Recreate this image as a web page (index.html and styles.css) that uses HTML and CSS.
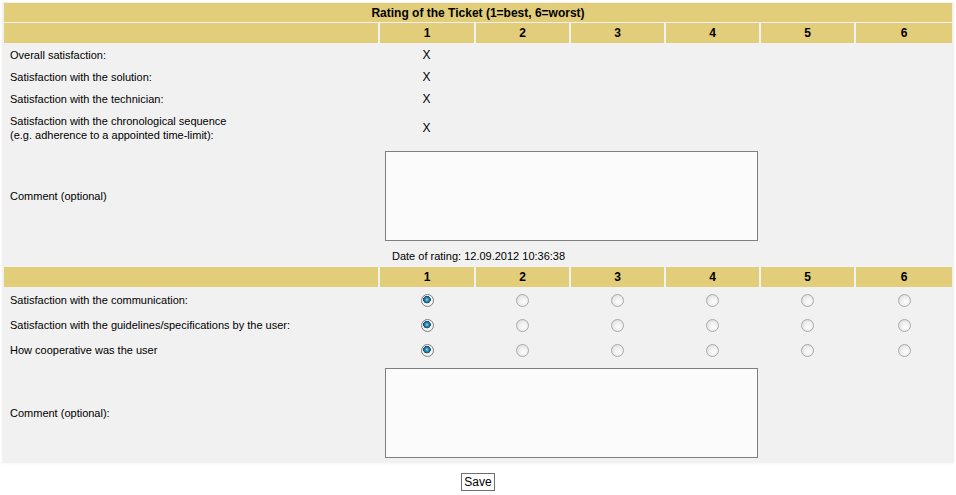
FILE: index.html
```html
<!DOCTYPE html>
<html>
<head>
<meta charset="utf-8">
<title>Rating of the Ticket</title>
<link rel="stylesheet" href="styles.css">
</head>
<body>
<form class="page">
<table class="rating">
  <colgroup>
    <col class="c-label"><col class="c-a"><col class="c-b"><col class="c-b"><col class="c-b"><col class="c-b"><col class="c-c">
  </colgroup>
  <tr class="head h19"><th colspan="7">Rating of the Ticket (1=best, 6=worst)</th></tr>
  <tr class="head h20"><th></th><th>1</th><th>2</th><th>3</th><th>4</th><th>5</th><th>6</th></tr>
  <tr class="h21"><td class="label">Overall satisfaction:</td><td class="mark">X</td><td></td><td></td><td></td><td></td><td></td></tr>
  <tr class="h21"><td class="label">Satisfaction with the solution:</td><td class="mark">X</td><td></td><td></td><td></td><td></td><td></td></tr>
  <tr class="h21"><td class="label">Satisfaction with the technician:</td><td class="mark">X</td><td></td><td></td><td></td><td></td><td></td></tr>
  <tr class="h36"><td class="label">Satisfaction with the chronological sequence<br>(e.g. adherence to a appointed time-limit):</td><td class="mark">X</td><td></td><td></td><td></td><td></td><td></td></tr>
  <tr class="h97"><td class="label">Comment (optional)</td><td colspan="6" class="area-cell"><textarea class="comment" readonly></textarea></td></tr>
  <tr class="h21"><td></td><td colspan="6" class="date">Date of rating: 12.09.2012 10:36:38</td></tr>
  <tr class="head h20"><th></th><th>1</th><th>2</th><th>3</th><th>4</th><th>5</th><th>6</th></tr>
  <tr class="h24">
    <td class="label">Satisfaction with the communication:</td>
    <td class="radio"><input type="radio" name="q1" checked></td>
    <td class="radio"><input type="radio" name="q1"></td>
    <td class="radio"><input type="radio" name="q1"></td>
    <td class="radio"><input type="radio" name="q1"></td>
    <td class="radio"><input type="radio" name="q1"></td>
    <td class="radio"><input type="radio" name="q1"></td>
  </tr>
  <tr class="h24">
    <td class="label">Satisfaction with the guidelines/specifications by the user:</td>
    <td class="radio"><input type="radio" name="q2" checked></td>
    <td class="radio"><input type="radio" name="q2"></td>
    <td class="radio"><input type="radio" name="q2"></td>
    <td class="radio"><input type="radio" name="q2"></td>
    <td class="radio"><input type="radio" name="q2"></td>
    <td class="radio"><input type="radio" name="q2"></td>
  </tr>
  <tr class="h24">
    <td class="label">How cooperative was the user</td>
    <td class="radio"><input type="radio" name="q3" checked></td>
    <td class="radio"><input type="radio" name="q3"></td>
    <td class="radio"><input type="radio" name="q3"></td>
    <td class="radio"><input type="radio" name="q3"></td>
    <td class="radio"><input type="radio" name="q3"></td>
    <td class="radio"><input type="radio" name="q3"></td>
  </tr>
  <tr class="h98"><td class="label">Comment (optional):</td><td colspan="6" class="area-cell2"><textarea class="comment"></textarea></td></tr>
</table>
<div class="actions"><button type="button" class="save">Save</button></div>
</form>
</body>
</html>
```

FILE: styles.css
```css
html, body {
  margin: 0;
  padding: 0;
  background: #ffffff;
}
body {
  font-family: "Liberation Sans", Arial, sans-serif;
  font-size: 11px;
  color: #000;
}
.page {
  margin: 0;
  padding: 2px 0 0 2px;
}
.rating {
  width: 952px;
  table-layout: fixed;
  border-collapse: separate;
  border-spacing: 2px 1px;
  background: #f1f1f1;
  box-shadow: 0 1px 2px rgba(0,0,0,0.04);
}
.c-label { width: 374px; }
.c-a { width: 94px; }
.c-b { width: 93px; }
.c-c { width: 96px; }

.rating th, .rating td {
  padding: 0;
  vertical-align: middle;
}
.head th {
  background: #e2cd7b;
  font-size: 12px;
  font-weight: bold;
  text-align: center;
  line-height: 14px;
}
.h19 th { height: 19px; }
.h20 th { height: 20px; }
.h21 td { height: 21px; }
.h24 td { height: 24px; }
.h36 td { height: 36px; }
.h97 td { height: 97px; }
.h98 td { height: 98px; }

.label {
  padding-left: 6px !important;
  line-height: 14px;
  white-space: nowrap;
}
.mark {
  text-align: center;
  font-size: 12px;
  padding-right: 1px !important;
}
.date {
  padding-left: 12px !important;
}
.area-cell {
  padding: 0 0 0 5px !important;
}
.area-cell2 {
  padding: 1px 0 0 5px !important;
}
.comment {
  display: block;
  width: 373px;
  height: 90px;
  box-sizing: border-box;
  margin: 0;
  border: 1px solid #7f7f7f;
  background: #fbfbfb;
  resize: none;
  font-family: "Liberation Sans", Arial, sans-serif;
  font-size: 11px;
}
.radio {
  text-align: center;
}
.radio input {
  -webkit-appearance: none;
  appearance: none;
  width: 13px;
  height: 13px;
  margin: 0;
  padding: 0;
  border-radius: 50%;
  border: 1px solid #a9a9a9;
  background: radial-gradient(circle at 60% 62%, #fdfdfd 0%, #efefef 45%, #d4d4d4 100%);
  box-sizing: border-box;
  vertical-align: middle;
  display: inline-block;
}
.radio input:checked {
  border: 1px solid #808080;
  background:
    radial-gradient(circle at 45% 42%, #8fe0f8 0px, #3594c0 1.6px, #1b5f86 3px, #154a6a 3.6px, rgba(255,255,255,0) 4px),
    radial-gradient(circle, #ffffff 0%, #f6f6f6 60%, #d8d8d8 100%);
}
.actions {
  text-align: center;
  padding-top: 10px;
  padding-right: 2px;
}
.save {
  font-family: "Liberation Sans", Arial, sans-serif;
  font-size: 12px;
  height: 18px;
  width: 34px;
  padding: 0;
  border: 1px solid #6f6f6f;
  background: #ffffff;
  color: #000;
  line-height: 14px;
}
```
